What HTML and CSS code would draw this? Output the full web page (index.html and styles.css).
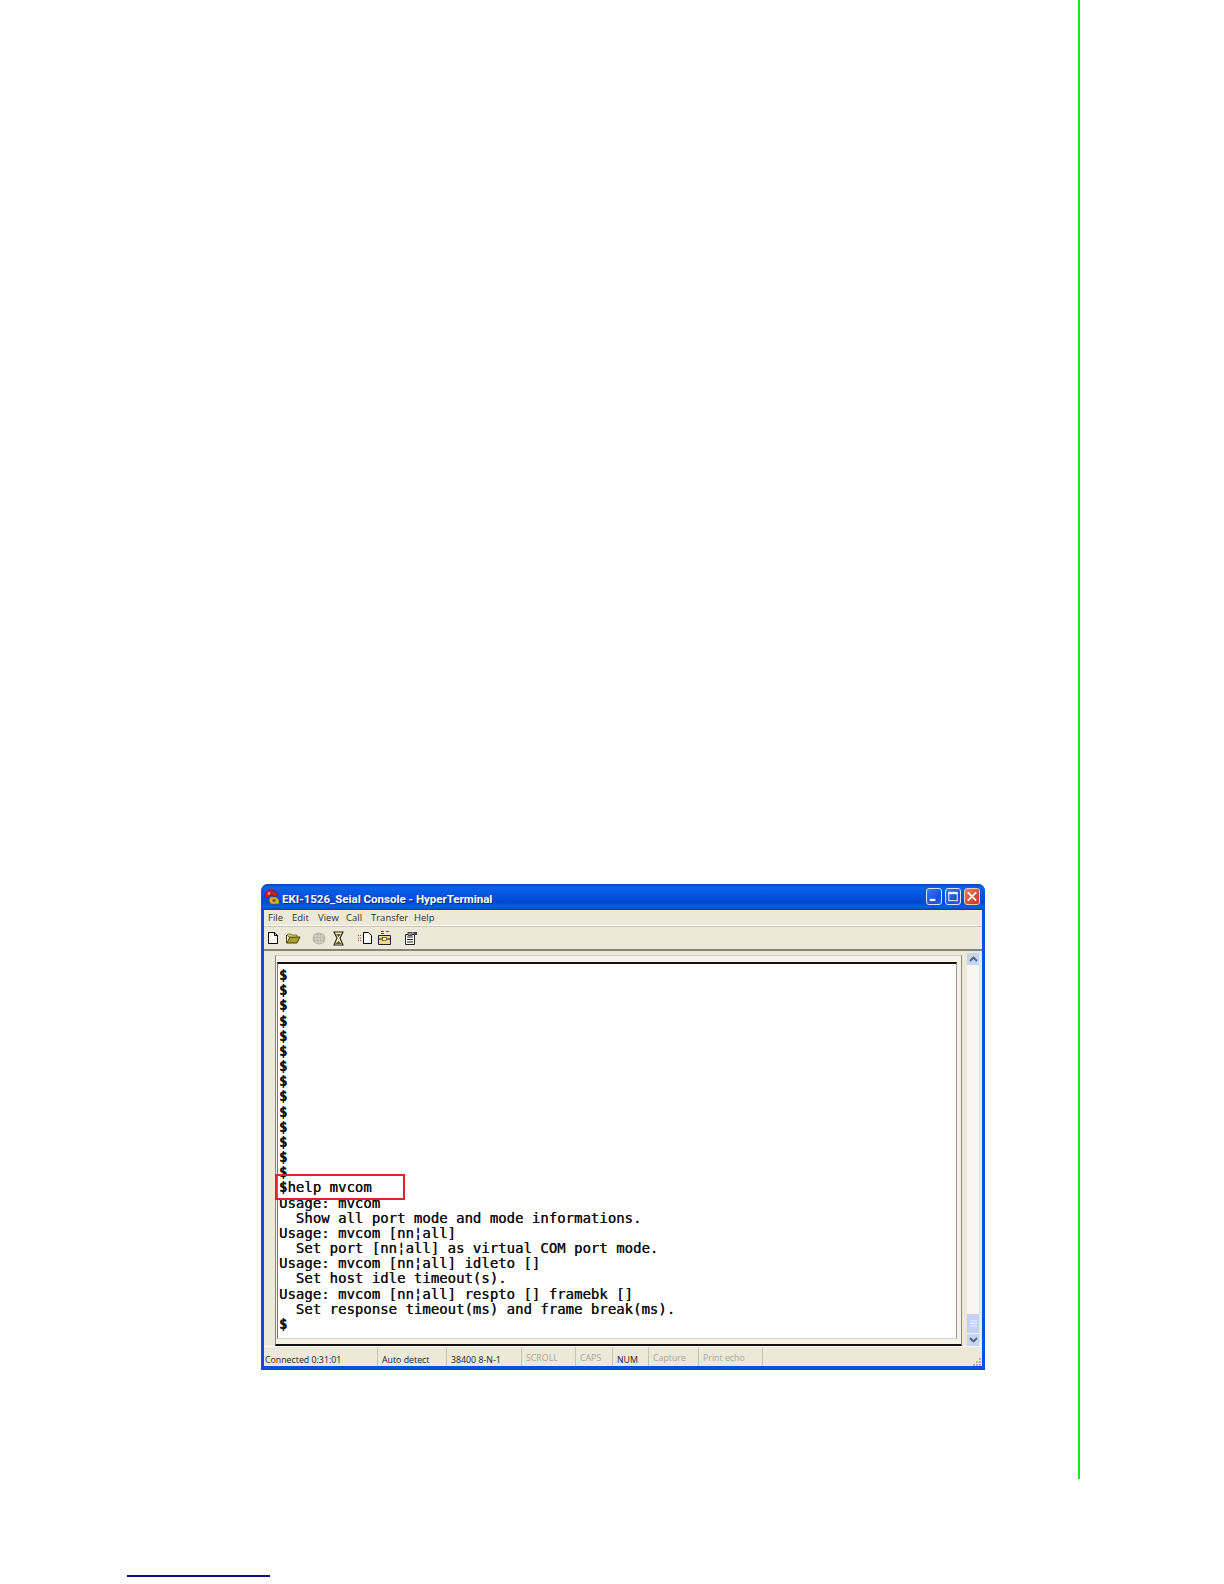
FILE: index.html
```html
<!DOCTYPE html>
<html lang="en">
<head>
<meta charset="utf-8">
<title>EKI-1526 HyperTerminal</title>
<link rel="stylesheet" href="styles.css">
</head>
<body>
<div class="page">
  <div class="green-rule"></div>
  <section class="window">
    <header class="titlebar">
      <svg class="app-icon" width="17" height="16" viewBox="0 0 17 16"><path d="M1 6c0-3 3-5 6-5s6 2 7 5l-3 2-2-2H6L4 9 1 8z" fill="#c8201c" stroke="#7a1010" stroke-width=".6"/><circle cx="5" cy="4.500" r="1.300" fill="#f0a0a0"/><path d="M6 8h6l3 3v4H7l-2-3z" fill="#d8b030" stroke="#6a5a10" stroke-width=".6"/><circle cx="10" cy="11.500" r="1.600" fill="#6a5a10"/></svg>
      <span class="title-text">EKI-1526_Seial Console - HyperTerminal</span>
      <div class="win-buttons">
        <div class="win-btn"><svg width="15" height="15" viewBox="0 0 15 15"><rect x="3" y="10" width="6" height="2.400" fill="#fff"/></svg></div>
        <div class="win-btn"><svg width="15" height="15" viewBox="0 0 15 15"><rect x="3" y="3" width="9" height="9" fill="none" stroke="#fff" stroke-width="1"/><rect x="3" y="3" width="9" height="2" fill="#fff"/></svg></div>
        <div class="win-btn close"><svg width="15" height="15" viewBox="0 0 15 15"><path d="M3 3l9 9M12 3l-9 9" stroke="#fff" stroke-width="1.800"/></svg></div>
      </div>
    </header>
    <nav class="menubar">
      <span class="m-file">File</span><span class="m-edit">Edit</span><span class="m-view">View</span><span class="m-call">Call</span><span class="m-transfer">Transfer</span><span>Help</span>
    </nav>
    <div class="toolbar">
      <svg class="t-new" width="10" height="12" viewBox="0 0 10 12"><path d="M.5.5h6l3 3v8H.5z" fill="#fff" stroke="#000"/><path d="M6.500.5v3h3" fill="none" stroke="#000"/></svg>
      <svg class="t-open" width="15" height="12" viewBox="0 0 15 12"><path d="M.5 3V11h10.500L14 5H4L1 11" fill="#a8a030" stroke="#44440c"/><path d="M1 3l1-1h3l1 1h5v2H3z" fill="#d8c850" stroke="#44440c" stroke-width=".6"/></svg>
      <svg class="t-phone" width="14" height="13" viewBox="0 0 14 13"><ellipse cx="7" cy="6.500" rx="6.500" ry="6" fill="#b4b3a6"/><path d="M2 4h10M1 7h12M3 10h8M4 2v9M7 1v11M10 2v9" stroke="#dedcd0" stroke-width=".8"/></svg>
      <svg class="t-hang" width="13" height="15" viewBox="0 0 13 15"><path d="M2 1h9L8 7l3 7H2l3-7z" fill="#f4ecc0" stroke="#222" stroke-width="1.100"/><path d="M3 13l3.500-3 3.500 3zM4 3h5L6.500 6z" fill="#6a5a20"/></svg>
      <svg class="t-send" width="15" height="12" viewBox="0 0 15 12"><path d="M6.500.5h5l3 3v8h-8z" fill="#fff" stroke="#000"/><path d="M1 3.500h4M1 6h4M1 8.500h4" stroke="#b03030" stroke-width="1.100" stroke-dasharray="1 1"/></svg>
      <svg class="t-recv" width="13" height="14" viewBox="0 0 13 14"><path d="M.5 4.500h12v9H.5z" fill="#f0dc78" stroke="#222"/><path d="M.5 8h12" stroke="#222"/><path d="M3 .5h3M8 .5h3M3 2.500h3" stroke="#c02020" stroke-width="1.100"/><rect x="4.500" y="6.500" width="4" height="3" fill="#fff" stroke="#222" stroke-width=".6"/></svg>
      <svg class="t-props" width="14" height="14" viewBox="0 0 14 14"><path d="M1.500 3.500h9v10h-9z" fill="#fff" stroke="#222"/><path d="M3 6h6M3 8.500h6M3 11h6" stroke="#222"/><rect x="4" y="1.500" width="4" height="3" fill="#999" stroke="#222" stroke-width=".7"/><path d="M9 1h4v3h-3z" fill="#446"/></svg>
    </div>
    <div class="client">
      <div class="terminal">
<pre class="screen"><b>$</b>
<b>$</b>
<b>$</b>
<b>$</b>
<b>$</b>
<b>$</b>
<b>$</b>
<b>$</b>
<b>$</b>
<b>$</b>
<b>$</b>
<b>$</b>
<b>$</b>
<b>$</b>
<b>$</b>help mvcom
Usage: mvcom
  Show all port mode and mode informations.
Usage: mvcom [nn¦all]
  Set port [nn¦all] as virtual COM port mode.
Usage: mvcom [nn¦all] idleto []
  Set host idle timeout(s).
Usage: mvcom [nn¦all] respto [] framebk []
  Set response timeout(ms) and frame break(ms).
<b>$</b></pre>
        <div class="callout"></div>
      </div>
      <aside class="scrollbar">
        <div class="sb-btn"><svg width="9" height="6" viewBox="0 0 9 6"><path d="M1 5l3.500-3.500L8 5" fill="none" stroke="#4d6185" stroke-width="1.800"/></svg></div>
        <div class="sb-track"></div>
        <div class="sb-thumb"><svg width="7" height="7" viewBox="0 0 7 7"><path d="M0 1h7M0 3.500h7M0 6h7" stroke="#eef2ff" stroke-width="1"/></svg></div>
        <div class="sb-btn"><svg width="9" height="6" viewBox="0 0 9 6"><path d="M1 1l3.500 3.500L8 1" fill="none" stroke="#4d6185" stroke-width="1.800"/></svg></div>
      </aside>
    </div>
    <footer class="statusbar">
      <span class="s-conn">Connected 0:31:01</span>
      <span class="s-auto">Auto detect</span>
      <span class="s-baud">38400 8-N-1</span>
      <span class="s-scroll off">SCROLL</span>
      <span class="s-caps off">CAPS</span>
      <span class="s-num">NUM</span>
      <span class="s-cap off">Capture</span>
      <span class="s-print off">Print echo</span>
      <span class="s-grip"><svg width="10" height="10" viewBox="0 0 10 10"><path d="M8 2h2v2H8zM5 5h2v2H5zM8 5h2v2H8zM2 8h2v2H2zM5 8h2v2H5zM8 8h2v2H8z" fill="#b4b2a4"/></svg></span>
    </footer>
  </section>
  <div class="footer-rule"></div>
</div>
</body>
</html>
```

FILE: styles.css
```css
* { box-sizing: border-box; }
html, body { margin: 0; padding: 0; background: #fff; }
.page {
  position: relative;
  width: 1224px;
  height: 1584px;
  padding-top: 884px;
  padding-left: 261px;
  overflow: hidden;
}
.green-rule {
  position: absolute;
  left: 1078px;
  top: 0;
  width: 2px;
  height: 1479px;
  background: #22e322;
}
.footer-rule {
  width: 143px;
  height: 1.500px;
  background: #0d0d8c;
  margin-left: -134px;
  margin-top: 205px;
}
.window {
  width: 724px;
  height: 486px;
  display: flex;
  flex-direction: column;
  background: #ece9d8;
  border-left: 3px solid #0a50d8;
  border-right: 3px solid #0a50d8;
  border-bottom: 4px solid #0a50d8;
  border-radius: 7px 7px 0 0;
  font-family: "Open Sans", "Liberation Sans", sans-serif;
}
.titlebar {
  flex: 0 0 26px;
  margin: 0 -3px;
  padding: 0 5px 0 3px;
  display: flex;
  align-items: center;
  border-radius: 7px 7px 0 0;
  background: linear-gradient(#0846b8 0, #0a62ea 12%, #0457e2 35%, #0048d0 70%, #0a5ee8 88%, #0640b0 100%);
}
.app-icon { margin-right: 1px; }
.title-text {
  font-family: "Roboto", "Liberation Sans", sans-serif;
  font-weight: 700;
  font-size: 11.500px;
  color: #fff;
  padding-top: 3px;
  text-shadow: 1px 1px 0 #0a2a80;
  white-space: nowrap;
}
.win-buttons { margin-left: auto; display: flex; gap: 3px; margin-top: -1px; }
.win-btn {
  width: 16px;
  height: 17px;
  border: 1px solid #d8e4ff;
  border-radius: 3px;
  background: linear-gradient(135deg, #3c78f0, #1a50d8 70%, #2f66e4);
  display: flex;
  align-items: center;
  justify-content: center;
}
.win-btn.close { background: linear-gradient(135deg, #e8806a, #d2482a 70%, #c03a20); border-color: #f0c8b8; }
.menubar {
  flex: 0 0 17px;
  padding: 0 0 2px 4px;
  display: flex;
  align-items: center;
  font-size: 9.500px;
  color: #333;
  border-bottom: 1px solid #c9c6b6;
  box-shadow: inset 0 -1px 0 #fbfaf3;
}
.m-file { width: 24px; }
.m-edit { width: 26px; }
.m-view { width: 28px; }
.m-call { width: 25px; }
.m-transfer { width: 43px; }
.toolbar {
  flex: 0 0 24px;
  padding-left: 4px;
  display: flex;
  align-items: center;
  border-bottom: 2px solid #86847a;
}
.t-new { margin-right: 8px; }
.t-open { margin-right: 11px; }
.t-phone { margin-right: 6px; }
.t-hang { margin-right: 12px; }
.t-send { margin-right: 6px; }
.t-recv { margin-right: 13px; }
.client {
  flex: 0 0 auto;
  display: flex;
  padding: 4px 3px 0 11px;
  gap: 5px;
}
.terminal {
  position: relative;
  width: 689px;
  height: 391px;
  padding: 6px 4px 5px 1px;
  border-top: 1px solid #d0cebf;
  border-left: 1px solid #8a887c;
  border-right: 1px solid #8a887c;
  border-bottom: 2px solid #111;
  background: #f5f3e8;
}
.screen {
  margin: 0;
  height: 377px;
  background: #fff;
  border-top: 2px solid #111;
  border-left: 1px solid #777;
  border-right: 1px solid #999;
  border-bottom: 1px solid #d8d6c8;
  padding: 4px 0 0 1px;
  font-family: "DejaVu Sans Mono", "Liberation Mono", monospace;
  font-size: 14px;
  line-height: 15.170px;
  color: #111;
  text-shadow: .2px 0 0 #111;
  overflow: hidden;
}
.callout {
  position: absolute;
  left: -1px;
  top: 218px;
  width: 130px;
  height: 26px;
  border: 2px solid #e0222a;
}
.scrollbar {
  width: 12px;
  height: 393px;
  margin-top: -2px;
  display: flex;
  flex-direction: column;
  background: #f6f5ee;
}
.sb-btn {
  flex: 0 0 12px;
  background: #c8d4f6;
  display: flex;
  align-items: center;
  justify-content: center;
}
.sb-track { flex: 1; }
.sb-thumb {
  flex: 0 0 19px;
  margin-bottom: 1px;
  background: #c3d0f8;
  display: flex;
  align-items: center;
  justify-content: center;
}
.statusbar {
  flex: 1;
  display: flex;
  align-items: center;
  font-size: 8.800px;
  color: #222;
  border-top: 1px solid #fbfaf3;
}
.statusbar span {
  height: 100%;
  display: flex;
  align-items: center;
  padding-left: 4px;
  padding-top: 6px;
  border-right: 1px solid #c6c3b2;
  white-space: nowrap;
}
.statusbar .s-conn { width: 114px; padding-left: 1px; }
.s-auto { width: 69px; }
.s-baud { width: 75px; }
.s-scroll { width: 54px; }
.s-caps { width: 37px; }
.s-num { width: 36px; }
.s-cap { width: 50px; }
.s-print { width: 64px; }
.statusbar .off { color: #a9a79a; padding-top: 2px; }
.statusbar .s-grip {
  flex: 1;
  border-right: 0;
  padding: 0 1px 0 0;
  justify-content: flex-end;
  align-items: flex-end;
}
```
